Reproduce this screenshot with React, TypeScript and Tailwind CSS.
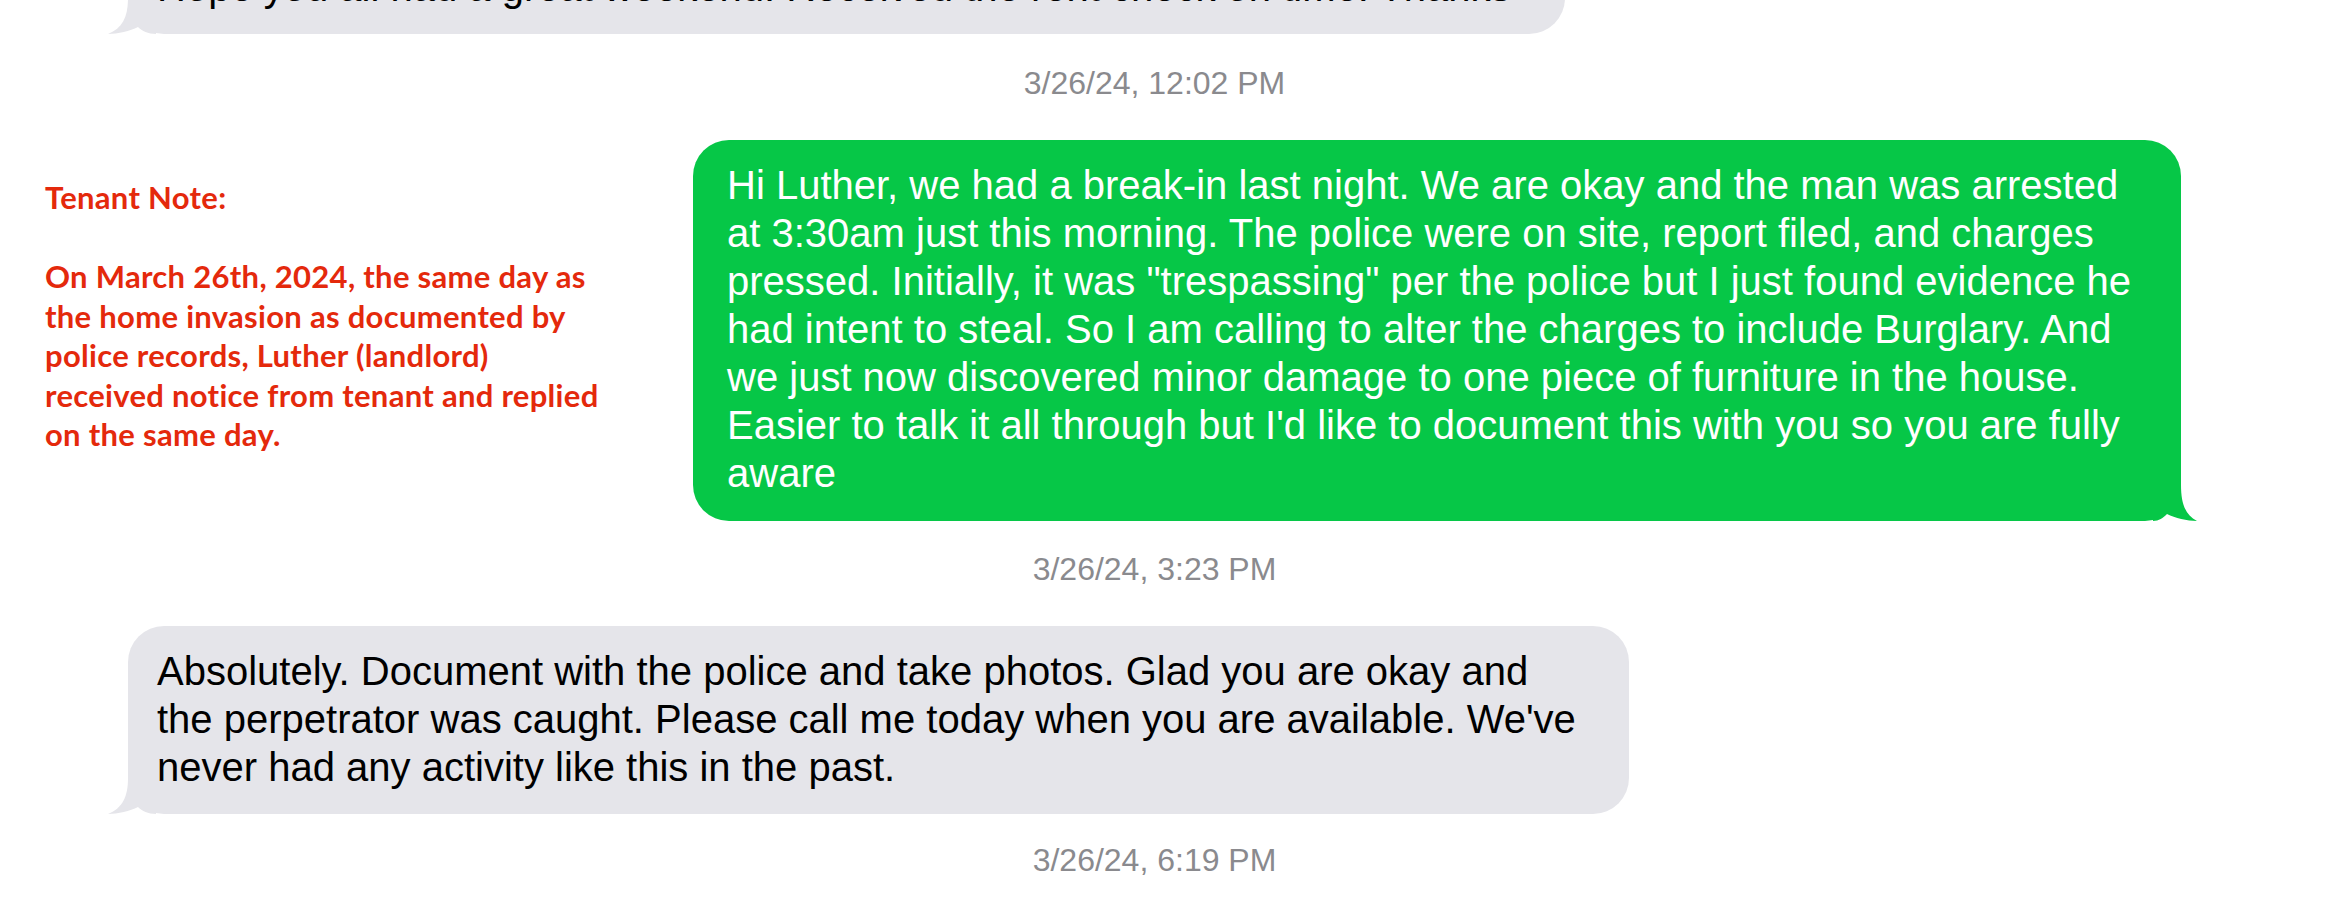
import type { ReactNode } from "react";

type BubbleProps = {
  lines: string[];
  mine?: boolean;
  className?: string;
};

function LeftTail() {
  return (
    <svg
      className="absolute -left-[20px] bottom-0 h-[36px] w-[48px]"
      viewBox="0 0 48 36"
      aria-hidden="true"
    >
      <path
        d="M20 0 C20 18 15 30 0 36 C10 36 22 33 30 29 C34 33 40 36 48 36 L48 0 Z"
        fill="#e5e5ea"
      />
    </svg>
  );
}

function RightTail() {
  return (
    <svg
      className="absolute -right-[16px] bottom-0 h-[36px] w-[44px]"
      viewBox="0 0 44 36"
      aria-hidden="true"
    >
      <path
        d="M28 0 C28 18 32 30 44 36 C34 36 22 33 14 29 C10 33 6 36 0 36 L0 0 Z"
        fill="#06c747"
      />
    </svg>
  );
}

function Bubble({ lines, mine = false, className = "" }: BubbleProps) {
  return (
    <div
      className={`relative rounded-[36px] pt-[21px] text-[40px] leading-[48px] whitespace-nowrap ${
        mine
          ? "bg-[#06c747] pb-[24px] pl-[34px] text-white"
          : "bg-[#e5e5ea] pb-[23px] pl-[29px] text-black"
      } ${className}`}
    >
      {mine ? <RightTail /> : <LeftTail />}
      <div className="relative">
        {lines.map((line) => (
          <div key={line}>{line}</div>
        ))}
      </div>
    </div>
  );
}

function Stamp({ children, className = "" }: { children: ReactNode; className?: string }) {
  return (
    <div className={`pl-[83px] text-center text-[32px] leading-[40px] text-[#8a8a8e] ${className}`}>
      {children}
    </div>
  );
}

export default function App() {
  return (
    <div className="h-[902px] w-full overflow-hidden bg-white font-['Liberation_Sans',Arial,sans-serif]">
      <div className="pl-[45px]">
        <div className="flex w-[2136px] flex-col">
          {/* previous message, mostly scrolled off */}
          <Bubble
            className="-mt-[58px] ml-[83px] w-[1437px]"
            lines={[
              "Hope you all had a great weekend. Received the rent check on time. Thanks",
            ]}
          />

          <Stamp className="mt-[29px]">3/26/24, 12:02 PM</Stamp>

          <div className="mt-[37px] flex items-start justify-between">
            {/* Tenant annotation */}
            <div className="mt-[38px] font-['Lato',sans-serif] text-[31px] leading-[39.5px] font-bold tracking-[0.3px] whitespace-nowrap text-[#e4290c]">
              <div>Tenant Note:</div>
              <div>&nbsp;</div>
              <div>On March 26th, 2024, the same day as</div>
              <div>the home invasion as documented by</div>
              <div>police records, Luther (landlord)</div>
              <div>received notice from tenant and replied</div>
              <div>on the same day.</div>
            </div>

            <Bubble
              mine
              className="w-[1488px]"
              lines={[
                "Hi Luther, we had a break-in last night. We are okay and the man was arrested",
                "at 3:30am just this morning. The police were on site, report filed, and charges",
                'pressed. Initially, it was "trespassing" per the police but I just found evidence he',
                "had intent to steal. So I am calling to alter the charges to include Burglary. And",
                "we just now discovered minor damage to one piece of furniture in the house.",
                "Easier to talk it all through but I'd like to document this with you so you are fully",
                "aware",
              ]}
            />
          </div>

          <Stamp className="mt-[28px]">3/26/24, 3:23 PM</Stamp>

          <Bubble
            className="mt-[37px] ml-[83px] w-[1501px]"
            lines={[
              "Absolutely. Document with the police and take photos. Glad you are okay and",
              "the perpetrator was caught. Please call me today when you are available. We've",
              "never had any activity like this in the past.",
            ]}
          />

          <Stamp className="mt-[26px]">3/26/24, 6:19 PM</Stamp>
        </div>
      </div>
    </div>
  );
}
